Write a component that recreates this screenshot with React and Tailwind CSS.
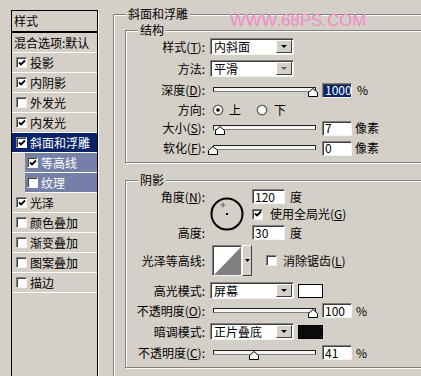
import React from 'react';

const font = { fontFamily: '"Noto Sans CJK SC", "Liberation Sans", sans-serif' };

const layers = [
  { name: '投影', on: true },
  { name: '内阴影', on: true },
  { name: '外发光', on: false },
  { name: '内发光', on: true },
  { name: '斜面和浮雕', on: true, active: true },
  { name: '等高线', on: true, sub: true },
  { name: '纹理', on: false, sub: true },
  { name: '光泽', on: true },
  { name: '颜色叠加', on: false },
  { name: '渐变叠加', on: false },
  { name: '图案叠加', on: false },
  { name: '描边', on: false },
];

function Check({ on }) {
  return (
    <span className="inline-flex w-[11px] h-[11px] shrink-0 items-center justify-center bg-white border border-[#808080] border-b-[#f4f4f4] border-r-[#f4f4f4] shadow-[inset_1px_1px_0_#404040]">
      {on && (
        <svg width="8" height="8" viewBox="0 0 8 8">
          <path d="M1 3.5 L3 5.5 L7 1.5" fill="none" stroke="black" strokeWidth="1.8" />
        </svg>
      )}
    </span>
  );
}

function Radio({ on }) {
  return (
    <svg width="12" height="12" viewBox="0 0 12 12" className="shrink-0">
      <circle cx="6" cy="6" r="5.5" fill="#808080" />
      <circle cx="6" cy="6" r="4.5" fill="white" stroke="#404040" strokeWidth="0.8" />
      {on && <circle cx="6" cy="6" r="1.8" fill="black" />}
    </svg>
  );
}

function Field({ value, selected, wide }) {
  return (
    <div
      className={`flex items-center h-[15px] border border-[#808080] border-b-[#f4f4f4] border-r-[#f4f4f4] shadow-[inset_1px_1px_0_#404040] pl-[2px] text-[12px] leading-none ${
        wide ? 'w-[33px]' : 'w-[30px]'
      } ${selected ? 'bg-[#0a246a] text-white' : 'bg-white'}`}
    >
      {value}
    </div>
  );
}

function Arrow({ grey }) {
  return (
    <svg width="6" height="4" viewBox="0 0 6 4">
      <path d="M0 0 H6 L3 3 Z" fill={grey ? '#606060' : 'black'} />
    </svg>
  );
}

function Select({ value, grey }) {
  return (
    <div className="flex items-center w-[84px] h-[17px] bg-white border border-[#808080] border-b-[#f4f4f4] border-r-[#f4f4f4] shadow-[inset_1px_1px_0_#404040] shrink-0">
      <span className="flex-1 pl-[3px] text-[12px] leading-none">{value}</span>
      <div className="w-[16px] h-[13px] mr-[1px] bg-[#d4d0c8] border border-white border-b-[#404040] border-r-[#404040] flex items-center justify-center">
        <Arrow grey={grey} />
      </div>
    </div>
  );
}

function Slider({ pos }) {
  return (
    <div className="relative w-[103px] h-[14px] ml-[3px] shrink-0">
      <div className="absolute left-0 right-0 top-[4px] h-[5px] bg-[#f4f4f4] border border-[#202020] border-b-[#808080]" />
      <svg className="absolute top-[5px]" style={{ left: pos - 5 }} width="10" height="9" viewBox="0 0 10 9">
        <path d="M0.5 8.5 V4.5 L5 0.5 L9.5 4.5 V8.5 Z" fill="white" stroke="black" />
      </svg>
    </div>
  );
}

function Label({ children }) {
  return <div className="w-[80px] shrink-0 text-right text-[12px] leading-none pr-[1px]">{children}</div>;
}

function Swatch({ black }) {
  return <div className={`w-[25px] h-[14px] ml-[4px] border border-black ${black ? 'bg-[#0a0a0a]' : 'bg-white'}`} />;
}

function Group({ title, className, children }) {
  return (
    <div className={`relative border border-[#808080] shadow-[1px_1px_0_#fff,inset_1px_1px_0_#fff] ${className}`}>
      <span className="absolute left-[12px] -top-[8px] px-[2px] bg-[#d4d0c8] text-[12px] leading-[14px]">{title}</span>
      {children}
    </div>
  );
}

function LeftPanel() {
  return (
    <div className="ml-[11px] mt-[10px] w-[87px] h-[380px] shrink-0 border border-black shadow-[1px_0_0_#fff] text-[12px]">
      <div className="h-[22px] border-b-2 border-black pl-[2px] flex items-center">样式</div>
      <div className="h-[20px] border-b border-white pl-[2px] flex items-center whitespace-nowrap overflow-hidden">混合选项:默认</div>
      {layers.map((l) => (
        <div key={l.name} className={`h-[20px] flex ${l.sub ? 'pl-[13px]' : ''}`}>
          <div
            className={`flex-1 flex items-center gap-[3px] border-b border-white ${l.sub ? 'pl-[2px]' : 'pl-[4px]'} ${
              l.active ? 'bg-[#0a246a] text-white' : l.sub ? 'bg-[#7580a8] text-white' : ''
            }`}
          >
            <Check on={l.on} />
            <span className="leading-none">{l.name}</span>
          </div>
        </div>
      ))}
    </div>
  );
}

function Structure() {
  return (
    <Group title="结构" className="w-[320px] h-[133px] pt-[7px]">
      <div className="flex items-center h-[17px]">
        <Label>样式(<u>T</u>):</Label>
        <div className="ml-[4px]"><Select value="内斜面" /></div>
      </div>
      <div className="flex items-center h-[17px] mt-[5px]">
        <Label>方法:</Label>
        <div className="ml-[4px]"><Select value="平滑" grey /></div>
      </div>
      <div className="flex items-center h-[18px] mt-[4px]">
        <Label>深度(<u>D</u>):</Label>
        <div className="ml-[4px] flex items-center">
          <Slider pos={100} />
          <div className="ml-[6px]"><Field value="1000" selected /></div>
          <span className="ml-[5px] text-[12px]">%</span>
        </div>
      </div>
      <div className="flex items-center h-[18px] mt-[2px]">
        <Label>方向:</Label>
        <div className="ml-[6px] flex items-center text-[12px] leading-none">
          <Radio on />
          <span className="ml-[5px]">上</span>
          <span className="ml-[15px]"><Radio /></span>
          <span className="ml-[6px]">下</span>
        </div>
      </div>
      <div className="flex items-center h-[18px]">
        <Label>大小(<u>S</u>):</Label>
        <div className="ml-[4px] flex items-center">
          <Slider pos={7} />
          <div className="ml-[6px]"><Field value="7" /></div>
          <span className="ml-[3px] text-[12px]">像素</span>
        </div>
      </div>
      <div className="flex items-center h-[18px] mt-[2px]">
        <Label>软化(<u>F</u>):</Label>
        <div className="ml-[4px] flex items-center">
          <Slider pos={0} />
          <div className="ml-[6px]"><Field value="0" /></div>
          <span className="ml-[3px] text-[12px]">像素</span>
        </div>
      </div>
    </Group>
  );
}

function Shading() {
  return (
    <Group title="阴影" className="w-[320px] h-[188px] mt-[17px] pt-[8px]">
      <div className="flex h-[51px]">
        <div className="flex flex-col justify-between">
          <div className="h-[15px] flex items-center"><Label>角度(<u>N</u>):</Label></div>
          <div className="h-[15px] flex items-center"><Label>高度:</Label></div>
        </div>
        <svg className="ml-[4px] mt-[8px]" width="34" height="34" viewBox="0 0 34 34">
          <circle cx="17" cy="17" r="15.5" fill="none" stroke="black" strokeWidth="2" />
          <rect x="16" y="16" width="2" height="2" fill="black" />
          <path d="M10.5 8 H15.5 M13 5.5 V10.5" stroke="#606060" strokeWidth="1" />
        </svg>
        <div className="ml-[8px] flex flex-col text-[12px] leading-none">
          <div className="flex items-center h-[15px]">
            <Field value="120" wide />
            <span className="ml-[5px]">度</span>
          </div>
          <div className="flex items-center h-[12px] mt-[4px]">
            <Check on />
            <span className="ml-[7px] whitespace-nowrap">使用全局光(<u>G</u>)</span>
          </div>
          <div className="flex items-center h-[15px] mt-[5px]">
            <Field value="30" wide />
            <span className="ml-[5px]">度</span>
          </div>
        </div>
      </div>
      <div className="flex items-center h-[31px] mt-[5px]">
        <Label>光泽等高线:</Label>
        <div className="flex ml-[6px] h-[31px]">
          <div className="w-[30px] h-[31px] bg-white border border-[#808080] border-b-[#f4f4f4] border-r-[#f4f4f4] shadow-[inset_1px_1px_0_#404040] overflow-hidden">
            <svg width="28" height="29" viewBox="0 0 28 29">
              <polygon points="1,29 28,1 28,29" fill="#808080" />
            </svg>
          </div>
          <div className="w-[10px] h-[31px] bg-[#d4d0c8] border border-white border-b-[#404040] border-r-[#404040] flex items-center justify-center">
            <svg width="5" height="3" viewBox="0 0 5 3"><path d="M0 0 H5 L2.5 3 Z" fill="black" /></svg>
          </div>
        </div>
        <div className="ml-[14px] flex items-center text-[12px] leading-none">
          <Check />
          <span className="ml-[6px] whitespace-nowrap">消除锯齿(<u>L</u>)</span>
        </div>
      </div>
      <div className="flex items-center h-[17px] mt-[6px]">
        <Label>高光模式:</Label>
        <div className="ml-[4px] flex items-center">
          <Select value="屏幕" />
          <Swatch />
        </div>
      </div>
      <div className="flex items-center h-[15px] mt-[4px]">
        <Label>不透明度(<u>O</u>):</Label>
        <div className="ml-[4px] flex items-center">
          <Slider pos={100} />
          <div className="ml-[6px]"><Field value="100" /></div>
          <span className="ml-[4px] text-[12px]">%</span>
        </div>
      </div>
      <div className="flex items-center h-[17px] mt-[5px]">
        <Label>暗调模式:</Label>
        <div className="ml-[4px] flex items-center">
          <Select value="正片叠底" />
          <Swatch black />
        </div>
      </div>
      <div className="flex items-center h-[15px] mt-[5px]">
        <Label>不透明度(<u>C</u>):</Label>
        <div className="ml-[4px] flex items-center">
          <Slider pos={41} />
          <div className="ml-[6px]"><Field value="41" /></div>
          <span className="ml-[4px] text-[12px]">%</span>
        </div>
      </div>
    </Group>
  );
}

export default function App() {
  return (
    <div className="relative w-[421px] h-[376px] bg-[#d4d0c8] overflow-hidden flex text-black" style={font}>
      <LeftPanel />
      <Group title="斜面和浮雕" className="ml-[15px] mt-[14px] w-[330px] h-[380px] shrink-0 pl-[11px] pt-[15px]">
        <Structure />
        <Shading />
      </Group>
      <div
        className="absolute left-[230px] top-[11px] text-[16.5px] leading-[18px] text-[#f28ac8] tracking-[0.2px]"
        style={{ fontFamily: '"Liberation Sans", sans-serif' }}
      >
        WWW.68PS.COM
      </div>
    </div>
  );
}
